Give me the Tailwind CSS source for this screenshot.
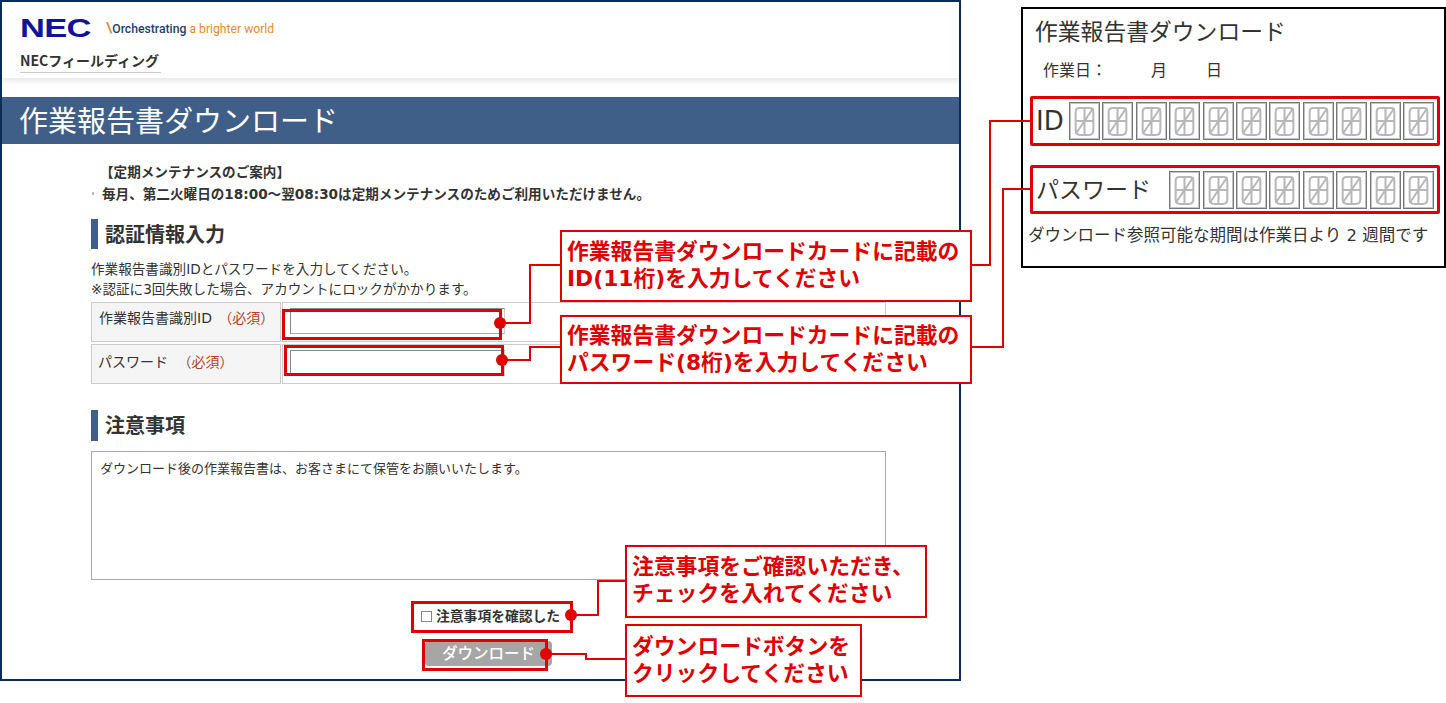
<!DOCTYPE html>
<html lang="ja">
<head>
<meta charset="utf-8">
<script src="https://cdn.jsdelivr.net/npm/@tailwindcss/browser@4"></script>
</head>
<body class="bg-white">
<div class="relative w-[1446px] h-[703px] overflow-hidden bg-white font-['DejaVu_Sans','Noto_Sans_CJK_JP',sans-serif] text-[#333]">
  <svg class="hidden"><defs>
    <symbol id="d" viewBox="0 0 29 36"><g fill="none" stroke="#b8b8b8" stroke-width="2.200"><path d="M5 8Q5 4 9 4H20Q24 4 24 8V18H5ZM5 18V28Q5 33 10 33H19Q24 33 24 28V18M14.500 4V33M24 4 5 32"/></g></symbol>
  </defs></svg>

  <div class="flex items-start">
    <!-- Main page -->
    <main class="w-[961px] h-[681px] shrink-0 border-2 border-[#0c2d57] bg-white flex flex-col">
      <header class="h-[76px] shrink-0 pl-[18px] pt-[14px] shadow-[0_3px_6px_rgba(0,0,0,0.10)]">
        <div class="flex items-center h-[24px]">
          <span class="w-[86px] font-['Liberation_Sans',sans-serif] font-bold text-[25px] leading-[24px] text-[#14149a] scale-x-[1.38] origin-left tracking-[-0.5px]">NEC</span>
          <span class="font-['Roboto',sans-serif] text-[12.200px] leading-[24px] text-[#f08a24] whitespace-nowrap"><span class="text-[#1d3f72] font-medium"><span class="text-[#e08a2c] text-[15px]">\</span>Orchestrating</span> a brighter world</span>
        </div>
        <div class="mt-[8px] w-[141px] h-[25px] border-b border-[#ccc] font-['Noto_Sans_CJK_JP',sans-serif] text-[14px] leading-[24px] font-bold text-[#333] whitespace-nowrap">NECフィールディング</div>
      </header>

      <div class="mt-[19px] h-[47px] shrink-0 bg-[#3f5f88] pl-[17px] pt-[2px] text-[29px] leading-[47px] text-white whitespace-nowrap">作業報告書ダウンロード</div>

      <div class="pl-[89px] w-[884px] flex flex-col">
        <div class="mt-[17px] pl-[11px] text-[13.600px] leading-[22px] font-bold text-[#333] whitespace-nowrap">
          <p class="-ml-[2px]">【定期メンテナンスのご案内】</p>
          <p class="relative"><span class="absolute left-[-10px] top-[9px] w-[2px] h-[3px] bg-[#bbb]"></span>毎月、第二火曜日の18:00～翌08:30は定期メンテナンスのためご利用いただけません。</p>
        </div>

        <h2 class="mt-[14px] h-[30px] border-l-[7px] border-[#3f5f88] pl-[7px] text-[20px] leading-[32px] font-bold text-[#333]">認証情報入力</h2>

        <p class="mt-[10px] text-[13.600px] leading-[20px] text-[#333] whitespace-nowrap">作業報告書識別IDとパスワードを入力してください。<br>※認証に3回失敗した場合、アカウントにロックがかかります。</p>

        <div class="mt-[3px] flex flex-col gap-[2px]">
          <div class="flex h-[40px] gap-[1px]">
            <div class="w-[190px] border border-[#ccc] bg-[#f5f5f5] pl-[7px] text-[14px] leading-[30px] whitespace-nowrap">作業報告書識別ID <span class="text-[#b5421c] ml-[2px]">（必須）</span></div>
            <div class="flex-1 border border-[#ccc] pl-[7px] pt-[5px]"><div class="w-[215px] h-[26px] border border-[#888] border-r-[#ccc] border-b-[#aaa] bg-white"></div></div>
          </div>
          <div class="flex h-[40px] gap-[1px]">
            <div class="w-[190px] border border-[#ccc] bg-[#f5f5f5] pl-[6px] text-[14px] leading-[34px] whitespace-nowrap">パスワード <span class="text-[#b5421c] ml-[5px]">（必須）</span></div>
            <div class="flex-1 border border-[#ccc] pl-[7px] pt-[5px]"><div class="w-[215px] h-[26px] border border-[#888] border-r-[#ccc] border-b-[#aaa] bg-white"></div></div>
          </div>
        </div>

        <h2 class="mt-[26px] h-[31px] border-l-[7px] border-[#3f5f88] pl-[7px] text-[20px] leading-[33px] font-bold text-[#333]">注意事項</h2>

        <div class="mt-[10px] h-[129px] border border-[#aaa] pl-[8px] pt-[7px] text-[13px] leading-[20px]">ダウンロード後の作業報告書は、お客さまにて保管をお願いいたします。</div>

        <label class="mt-[26px] ml-[330px] flex items-center h-[20px] gap-[4px] text-[13.800px] font-bold whitespace-nowrap"><span class="w-[11px] h-[11px] border border-[#888] bg-white"></span>注意事項を確認した</label>

        <div class="mt-[15px] ml-[334px] w-[127px] h-[25px] rounded-[4px] bg-[#a6a6a6] text-white text-[15.500px] font-medium leading-[26px] text-center">ダウンロード</div>
      </div>
    </main>

    <!-- Reference card -->
    <aside class="ml-[60px] mt-[7px] w-[425px] h-[261px] shrink-0 border-2 border-black bg-white flex flex-col text-[#333]">
      <div class="pl-[12px] pt-[6px] text-[22.800px] leading-[34px] whitespace-nowrap">作業報告書ダウンロード</div>
      <div class="pl-[20px] mt-[10px] flex text-[16px] leading-[24px]"><span class="w-[108px]">作業日：</span><span class="w-[55px]">月</span><span>日</span></div>
      <div class="mt-[13px] ml-[7px] mr-[4px] h-[50px] border-[3px] border-[#e00000] rounded-[2px] flex items-center justify-between px-[3px]">
        <span class="text-[26px] leading-[30px] text-[#333]">ID</span>
        <div class="flex gap-[2.400px]">
          <div class="w-[31px] h-[38px] border border-[#777] bg-white shadow-[inset_0_0_0_1px_#c4c4c4] p-[1px]"><svg class="w-full h-full"><use href="#d" width="100%" height="100%"/></svg></div>
          <div class="w-[31px] h-[38px] border border-[#777] bg-white shadow-[inset_0_0_0_1px_#c4c4c4] p-[1px]"><svg class="w-full h-full"><use href="#d" width="100%" height="100%"/></svg></div>
          <div class="w-[31px] h-[38px] border border-[#777] bg-white shadow-[inset_0_0_0_1px_#c4c4c4] p-[1px]"><svg class="w-full h-full"><use href="#d" width="100%" height="100%"/></svg></div>
          <div class="w-[31px] h-[38px] border border-[#777] bg-white shadow-[inset_0_0_0_1px_#c4c4c4] p-[1px]"><svg class="w-full h-full"><use href="#d" width="100%" height="100%"/></svg></div>
          <div class="w-[31px] h-[38px] border border-[#777] bg-white shadow-[inset_0_0_0_1px_#c4c4c4] p-[1px]"><svg class="w-full h-full"><use href="#d" width="100%" height="100%"/></svg></div>
          <div class="w-[31px] h-[38px] border border-[#777] bg-white shadow-[inset_0_0_0_1px_#c4c4c4] p-[1px]"><svg class="w-full h-full"><use href="#d" width="100%" height="100%"/></svg></div>
          <div class="w-[31px] h-[38px] border border-[#777] bg-white shadow-[inset_0_0_0_1px_#c4c4c4] p-[1px]"><svg class="w-full h-full"><use href="#d" width="100%" height="100%"/></svg></div>
          <div class="w-[31px] h-[38px] border border-[#777] bg-white shadow-[inset_0_0_0_1px_#c4c4c4] p-[1px]"><svg class="w-full h-full"><use href="#d" width="100%" height="100%"/></svg></div>
          <div class="w-[31px] h-[38px] border border-[#777] bg-white shadow-[inset_0_0_0_1px_#c4c4c4] p-[1px]"><svg class="w-full h-full"><use href="#d" width="100%" height="100%"/></svg></div>
          <div class="w-[31px] h-[38px] border border-[#777] bg-white shadow-[inset_0_0_0_1px_#c4c4c4] p-[1px]"><svg class="w-full h-full"><use href="#d" width="100%" height="100%"/></svg></div>
          <div class="w-[31px] h-[38px] border border-[#777] bg-white shadow-[inset_0_0_0_1px_#c4c4c4] p-[1px]"><svg class="w-full h-full"><use href="#d" width="100%" height="100%"/></svg></div>
        </div>
      </div>
      <div class="mt-[19px] ml-[7px] mr-[4px] h-[49px] border-[3px] border-[#e00000] rounded-[2px] flex items-center justify-between px-[3px]">
        <span class="text-[23px] leading-[30px] whitespace-nowrap">パスワード</span>
        <div class="flex gap-[2.400px]">
          <div class="w-[31px] h-[38px] border border-[#777] bg-white shadow-[inset_0_0_0_1px_#c4c4c4] p-[1px]"><svg class="w-full h-full"><use href="#d" width="100%" height="100%"/></svg></div>
          <div class="w-[31px] h-[38px] border border-[#777] bg-white shadow-[inset_0_0_0_1px_#c4c4c4] p-[1px]"><svg class="w-full h-full"><use href="#d" width="100%" height="100%"/></svg></div>
          <div class="w-[31px] h-[38px] border border-[#777] bg-white shadow-[inset_0_0_0_1px_#c4c4c4] p-[1px]"><svg class="w-full h-full"><use href="#d" width="100%" height="100%"/></svg></div>
          <div class="w-[31px] h-[38px] border border-[#777] bg-white shadow-[inset_0_0_0_1px_#c4c4c4] p-[1px]"><svg class="w-full h-full"><use href="#d" width="100%" height="100%"/></svg></div>
          <div class="w-[31px] h-[38px] border border-[#777] bg-white shadow-[inset_0_0_0_1px_#c4c4c4] p-[1px]"><svg class="w-full h-full"><use href="#d" width="100%" height="100%"/></svg></div>
          <div class="w-[31px] h-[38px] border border-[#777] bg-white shadow-[inset_0_0_0_1px_#c4c4c4] p-[1px]"><svg class="w-full h-full"><use href="#d" width="100%" height="100%"/></svg></div>
          <div class="w-[31px] h-[38px] border border-[#777] bg-white shadow-[inset_0_0_0_1px_#c4c4c4] p-[1px]"><svg class="w-full h-full"><use href="#d" width="100%" height="100%"/></svg></div>
          <div class="w-[31px] h-[38px] border border-[#777] bg-white shadow-[inset_0_0_0_1px_#c4c4c4] p-[1px]"><svg class="w-full h-full"><use href="#d" width="100%" height="100%"/></svg></div>
        </div>
      </div>
      <div class="pl-[5px] mt-[9px] text-[16.500px] leading-[26px] whitespace-nowrap">ダウンロード参照可能な期間は作業日より 2 週間です</div>
    </aside>
  </div>

  <!-- Annotation layer -->
  <svg class="absolute left-0 top-0 w-[1446px] h-[703px] pointer-events-none" viewBox="0 0 1446 703">
    <g fill="none" stroke="#e00000" stroke-width="2">
      <path d="M500 323H530V265H560"/>
      <path d="M502 360H530V347H560"/>
      <path d="M971 265H990V121H1030"/>
      <path d="M971 347H1003V189H1030"/>
      <path d="M571 615H598V581H625"/>
      <path d="M546 654H586V659H625"/>
    </g>
    <g fill="#e00000">
      <circle cx="500" cy="323" r="6"/>
      <circle cx="502" cy="360" r="6"/>
      <circle cx="571" cy="615" r="6"/>
      <circle cx="546" cy="654" r="6"/>
    </g>
  </svg>
  <div class="absolute left-[282px] top-[309px] w-[220px] h-[31px] border-[3px] border-[#e00000]"></div>
  <div class="absolute left-[284px] top-[345px] w-[220px] h-[31px] border-[3px] border-[#e00000]"></div>
  <div class="absolute left-[411px] top-[601px] w-[162px] h-[32px] border-[3px] border-[#e00000]"></div>
  <div class="absolute left-[422px] top-[639px] w-[126px] h-[32px] border-[3px] border-[#e00000]"></div>

  <div class="absolute left-[560px] top-[230px] w-[412px] h-[72px] border-2 border-[#e00000] bg-white pl-[5px] pt-[6px] text-[21.800px] leading-[27px] font-bold text-[#e00000] whitespace-nowrap">作業報告書ダウンロードカードに記載の<br>ID(11桁)を入力してください</div>
  <div class="absolute left-[560px] top-[315px] w-[412px] h-[69px] border-2 border-[#e00000] bg-white pl-[5px] pt-[5px] text-[21.800px] leading-[27px] font-bold text-[#e00000] whitespace-nowrap">作業報告書ダウンロードカードに記載の<br>パスワード(8桁)を入力してください</div>
  <div class="absolute left-[625px] top-[545px] w-[302px] h-[73px] border-2 border-[#e00000] bg-white pl-[5px] pt-[6px] text-[21.800px] leading-[27px] font-bold text-[#e00000] whitespace-nowrap">注意事項をご確認いただき、<br>チェックを入れてください</div>
  <div class="absolute left-[625px] top-[624px] w-[237px] h-[73px] border-2 border-[#e00000] bg-white pl-[5px] pt-[7px] text-[21.800px] leading-[27px] font-bold text-[#e00000] whitespace-nowrap">ダウンロードボタンを<br>クリックしてください</div>
</div>
</body>
</html>
